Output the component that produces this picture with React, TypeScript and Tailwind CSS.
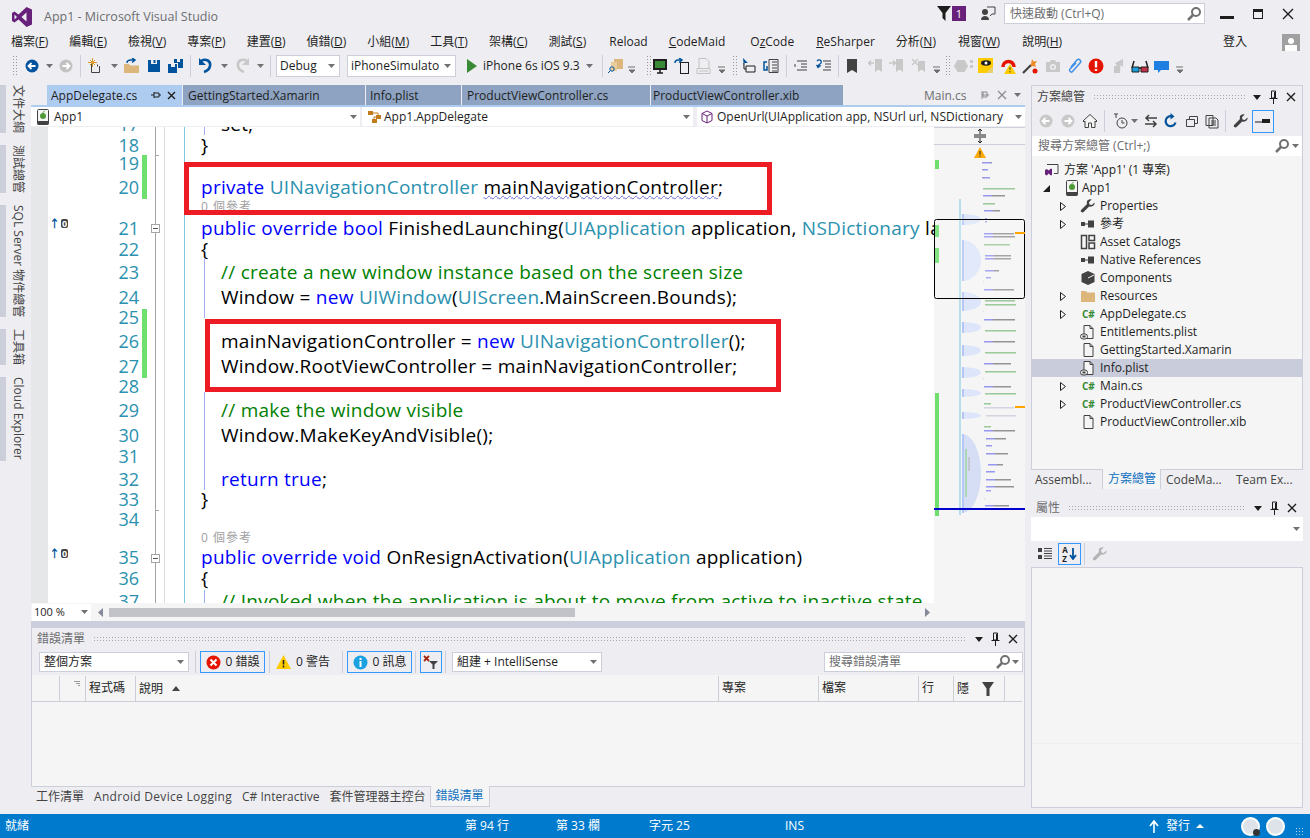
import React from 'react';

// small triangle used by every dropdown
const Caret = ({ className = '' }: { className?: string }) => (
  <svg width="7" height="4" viewBox="0 0 7 4" className={`shrink-0 ${className}`}><path d="M0 0h7L3.5 4z" fill="#717171" /></svg>
);

const Overflow = ({ className = '' }: { className?: string }) => (
  <svg width="8" height="16" viewBox="0 0 8 16" className={`shrink-0 ${className}`}><path d="M0 9h7M1 12h6L4 15z" stroke="#717171" fill="#717171" /></svg>
);

const Gripper = ({ className = '' }: { className?: string }) => (
  <div className={`w-[5px] h-[22px] shrink-0 bg-[radial-gradient(#9a9a9a_0.7px,transparent_0.8px)] bg-[length:3px_3px] ${className}`} />
);

const Sep = ({ className = '' }: { className?: string }) => <div className={`w-px h-[22px] shrink-0 bg-[#ccced9] ${className}`} />;

const Ic = ({ children, className = '', w = 16 }: { children: React.ReactNode; className?: string; w?: number }) => (
  <svg width={w} height="16" viewBox={`0 0 ${w} 16`} className={`shrink-0 ${className}`} fill="none">{children}</svg>
);

const NavCircle = ({ color, dir, className }: { color: string; dir: 'l' | 'r'; className?: string }) => (
  <Ic className={className}>
    <circle cx="8" cy="8" r="6.5" fill={color} />
    <path d={dir === 'l' ? 'M11.5 8H5M7.5 5 4.5 8l3 3' : 'M4.5 8H11M8.5 5l3 3-3 3'} stroke="#fff" strokeWidth="1.8" />
  </Ic>
);

const Floppy = ({ className }: { className?: string }) => (
  <Ic className={className}><path d="M2 2h3v4h6V2h3v12H2z" fill="#00539c" /><rect x="7.5" y="2" width="2" height="3" fill="#00539c" /></Ic>
);

const Wrench = ({ color = '#424242', className }: { color?: string; className?: string }) => (
  <Ic className={className}><path d="M14.5 4.5 11.8 7 9.5 6.5 9 4.2l2.6-2.7C9.5.8 7.2 1.8 6.8 4c-.1.8 0 1.5.2 2L1.3 11.7c-.7.8-.7 1.7 0 2.4.7.7 1.6.6 2.3 0L9.2 8.4c2.6.9 5.9-1 5.3-3.9z" fill={color} /></Ic>
);

const Doc = ({ lock = false }: { lock?: boolean }) => (
  <Ic>
    <path d="M4 1.5h6l3 3v10H4z" fill="#f5f5f5" stroke="#424242" />
    <path d="M10 1.5v3h3" stroke="#424242" />
    {lock && <><rect x="0.5" y="10" width="7" height="5" rx="2.5" fill="#f5f5f5" stroke="#424242" /><rect x="2.5" y="11.5" width="3" height="2" fill="#424242" /></>}
  </Ic>
);

const Refs = () => <Ic><rect x="1" y="6" width="4" height="4" fill="#424242" /><path d="M5 8h3" stroke="#424242" /><rect x="8" y="4.5" width="6" height="7" fill="#424242" /></Ic>;

const Folder = () => <Ic><path d="M1 3h5l1 1.5h8V14H1z" fill="#dcb67a" /></Ic>;

const CSharp = () => <span className="w-[16px] pl-[2px] text-[10px] font-bold leading-none text-[#388a34]">C#</span>;

const PhoneApp = () => (
  <Ic>
    <rect x="2.5" y="0.5" width="11" height="15" rx="1" fill="#f5f5f5" stroke="#424242" />
    <rect x="2.5" y="12" width="11" height="3.5" fill="#424242" />
    <circle cx="8" cy="7" r="3" fill="#4f9a36" />
    <path d="M8 4c0-1 .8-1.8 1.6-1.8" stroke="#4f9a36" />
  </Ic>
);

const Magnifier = ({ className = '' }: { className?: string }) => (
  <Ic className={className}><circle cx="10" cy="6" r="4" stroke="#717171" strokeWidth="2" /><path d="M7 9l-5 5" stroke="#717171" strokeWidth="2.5" /></Ic>
);

const Expander = ({ open = false }: { open?: boolean }) =>
  open ? (
    <svg width="7" height="7" viewBox="0 0 7 7"><path d="M7 0v7H0z" fill="#1e1e1e" /></svg>
  ) : (
    <svg width="6" height="9" viewBox="0 0 6 9"><path d="M.5.5l5 4-5 4z" fill="#f5f5f5" stroke="#1e1e1e" /></svg>
  );

// title buttons of a tool window: dropdown, pin, close
const PaneButtons = () => (
  <div className="flex items-center gap-[8px] shrink-0">
    <svg width="8" height="5" viewBox="0 0 8 5"><path d="M0 0h8L4 5z" fill="#1e1e1e" /></svg>
    <svg width="9" height="14" viewBox="0 0 9 14"><path d="M2.5 1h4v7h-4zM0.5 8.5h8M4.5 9v5M5.5 2v6" stroke="#1e1e1e" fill="none" /></svg>
    <svg width="10" height="10" viewBox="0 0 10 10"><path d="M1 1l8 8M9 1l-8 8" stroke="#1e1e1e" strokeWidth="1.4" /></svg>
  </div>
);

const PaneTitle = ({ title, dim = false }: { title: string; dim?: boolean }) => (
  <div className="h-[20px] shrink-0 flex items-center pl-[5px] pr-[6px] pt-[2px]">
    <span className={`text-[12px] ${dim ? 'text-[#6d6d70]' : 'text-[#444444]'}`}>{title}</span>
    <div className="flex-1 h-[6px] mx-[8px] bg-[radial-gradient(#a8a8a8_0.6px,transparent_0.7px)] bg-[length:3px_3px]" />
    <PaneButtons />
  </div>
);

const Menu = ({ label, u, after = '', className = '' }: { label: string; u: string; after?: string; className?: string }) => (
  <span className={className}>{label}<span className="underline">{u}</span>{after}</span>
);

type Tok = { t: string; c?: 'k' | 'y' | 'g' | 'w' };

const tone = { k: 'text-[#0000ff]', y: 'text-[#2b91af]', g: 'text-[#008000]', w: 'underline decoration-wavy decoration-[#6a6ad8] decoration-1' };

const lines: { n?: number; h: string; lens?: boolean; deep?: boolean; code?: Tok[] }[] = [
  { n: 17, h: 'h-[21px]', deep: true, code: [{ t: 'set;' }] },
  { n: 18, h: 'h-[18px]', code: [{ t: '}' }] },
  { n: 19, h: 'h-[24px]' },
  { n: 20, h: 'h-[19px]', code: [{ t: 'private ', c: 'k' }, { t: 'UINavigationController ', c: 'y' }, { t: 'mainNavigationController', c: 'w' }, { t: ';' }] },
  { h: 'h-[22px]', lens: true },
  { n: 21, h: 'h-[21px]', code: [{ t: 'public override bool ', c: 'k' }, { t: 'FinishedLaunching(' }, { t: 'UIApplication ', c: 'y' }, { t: 'application, ' }, { t: 'NSDictionary ', c: 'y' }, { t: 'launchOptions)' }] },
  { n: 22, h: 'h-[23px]', code: [{ t: '{' }] },
  { n: 23, h: 'h-[25px]', deep: true, code: [{ t: '// create a new window instance based on the screen size', c: 'g' }] },
  { n: 24, h: 'h-[20px]', deep: true, code: [{ t: 'Window = ' }, { t: 'new ', c: 'k' }, { t: 'UIWindow', c: 'y' }, { t: '(' }, { t: 'UIScreen', c: 'y' }, { t: '.MainScreen.Bounds);' }] },
  { n: 25, h: 'h-[24px]' },
  { n: 26, h: 'h-[25px]', deep: true, code: [{ t: 'mainNavigationController = ' }, { t: 'new ', c: 'k' }, { t: 'UINavigationController', c: 'y' }, { t: '();' }] },
  { n: 27, h: 'h-[20px]', deep: true, code: [{ t: 'Window.RootViewController = mainNavigationController;' }] },
  { n: 28, h: 'h-[24px]' },
  { n: 29, h: 'h-[25px]', deep: true, code: [{ t: '// make the window visible', c: 'g' }] },
  { n: 30, h: 'h-[21px]', deep: true, code: [{ t: 'Window.MakeKeyAndVisible();' }] },
  { n: 31, h: 'h-[23px]' },
  { n: 32, h: 'h-[20px]', deep: true, code: [{ t: 'return true', c: 'k' }, { t: ';' }] },
  { n: 33, h: 'h-[20px]', code: [{ t: '}' }] },
  { n: 34, h: 'h-[18px]' },
  { h: 'h-[20px]', lens: true },
  { n: 35, h: 'h-[21px]', code: [{ t: 'public override void ', c: 'k' }, { t: 'OnResignActivation(' }, { t: 'UIApplication ', c: 'y' }, { t: 'application)' }] },
  { n: 36, h: 'h-[23px]', code: [{ t: '{' }] },
  { n: 37, h: 'h-[24px]', deep: true, code: [{ t: '// Invoked when the application is about to move from active to inactive state', c: 'g' }] },
];

// minimap rows: y, x, width, kind (c code with blue start, g comment, d dim, b blue, t thin)
const mini: [number, number, number, string][] = [
  [162, 981, 10, 'c'], [169, 981, 6, 'c'], [177, 981, 8, 'c'], [188, 982, 32, 'g'], [195, 982, 22, 'c'], [203, 982, 12, 'g'], [210, 983, 16, 'c'],
  [218, 984, 2, 'b'], [221, 984, 2, 'b'], [233, 983, 30, 'c'], [236, 983, 31, 'c'], [244, 983, 26, 'g'], [255, 984, 26, 'c'], [258, 984, 26, 'c'],
  [270, 984, 14, 'c'], [277, 985, 5, 'b'], [281, 982, 1, 't'], [289, 983, 30, 'c'], [300, 984, 30, 'g'], [304, 984, 31, 'g'], [311, 982, 1, 't'],
  [319, 983, 31, 'c'], [330, 984, 31, 'g'], [341, 983, 31, 'c'], [352, 984, 31, 'g'], [363, 983, 27, 'c'], [371, 984, 31, 'g'], [378, 982, 1, 't'],
  [386, 983, 27, 'c'], [393, 984, 31, 'g'], [403, 983, 7, 'g'], [407, 983, 30, 'd'], [415, 985, 30, 'd'], [426, 983, 7, 'g'], [430, 983, 31, 'c'],
  [438, 985, 20, 'c'], [445, 985, 6, 'c'], [453, 985, 22, 'c'], [464, 987, 15, 'c'], [471, 985, 9, 'c'], [479, 985, 25, 'c'], [486, 985, 28, 'c'],
  [490, 985, 5, 'b'], [498, 983, 1, 't'], [505, 984, 24, 'c'],
];

const folds: [number, number][] = [[214, 225], [240, 281], [292, 311], [322, 333], [345, 356], [367, 378], [389, 397], [412, 419], [434, 513]];

const Minimap = () => (
  <div className="w-[91px] shrink-0 h-full flex flex-col bg-[#f5f5f5]">
    <div className="h-[18px] shrink-0 flex items-center justify-center border-y border-[#ccced9]">
      <svg width="12" height="14" viewBox="0 0 12 14"><path d="M0 6h12M0 8h12M6 0v5M6 9v5M4 2l2-2 2 2M4 12l2 2 2-2" stroke="#1e1e1e" fill="none" /></svg>
    </div>
    <div className="h-[15px] shrink-0 flex items-center justify-center">
      <svg width="12" height="11" viewBox="0 0 12 11"><path d="M6 0l6 11H0z" fill="#f8a90c" /><path d="M6 4v3.5M6 8.5v1.2" stroke="#222" /></svg>
    </div>
    <svg viewBox="933 160 91 443" width="91" height="443" className="shrink-0">
      <rect x="934" y="160" width="4" height="9" fill="#6fe06f" />
      <rect x="934" y="225" width="4" height="12" fill="#6fe06f" />
      <rect x="934" y="248" width="4" height="15" fill="#6fe06f" />
      <rect x="934" y="393" width="4" height="123" fill="#6fe06f" />
      <rect x="958" y="199" width="2" height="316" fill="#b5deea" />
      {folds.map(([a, b]) => (
        <g key={a}>
          <path d={`M961 ${a}A19 ${(b - a) / 2} 0 0 1 961 ${b}Z`} fill={b - a > 60 ? '#d5def5' : '#dde5fb'} />
          <rect x="961" y={a} width="2" height={b - a} fill="#b6c6f5" />
        </g>
      ))}
      <rect x="964" y="449" width="2" height="48" fill="#a9d6b5" />
      <rect x="967" y="457" width="2" height="14" fill="#c4c8d2" />
      {mini.map(([y, x, w, k]) =>
        k === 'c' ? (
          <g key={y} opacity=".6">
            <rect x={x} y={y} width={Math.min(w, 9)} height="1.5" fill="#5a5af0" />
            {w > 9 && <rect x={x + 9} y={y} width={w - 9} height="1.5" fill="#555" />}
          </g>
        ) : (
          <rect key={y} x={x} y={y} width={w} height="1.5" opacity=".55" fill={k === 'g' ? '#4fa54f' : k === 'b' ? '#5a5af0' : k === 'd' ? '#b4b8d0' : '#c8c8c8'} />
        )
      )}
      <rect x="933.5" y="219.5" width="90" height="79" rx="2" fill="#ffffff" fillOpacity=".15" stroke="#000" />
      <rect x="1014" y="232" width="10" height="2" fill="#ffa500" />
      <rect x="1014" y="406" width="10" height="2" fill="#ffa500" />
      <rect x="933" y="508" width="91" height="2" fill="#0000cd" />
    </svg>
  </div>
);

const Editor = () => (
  <div className="h-[476px] shrink-0 flex overflow-hidden">
    <div className="w-[17px] shrink-0 bg-[#e6e7e8]" />
    <div className="relative flex-1 min-w-0 bg-white overflow-hidden font-['Open_Sans','Noto_Sans_CJK_TC',sans-serif]">
      <div className="-mt-[15px]">
        {lines.map((l, i) => (
          <div key={i} className={`${l.h} flex whitespace-nowrap`}>
            <div className="w-[92px] shrink-0 pt-[3px] pr-[1px] text-right text-[18px] leading-[18px] text-[#2b91af]">{l.n}</div>
            {l.lens ? (
              <div className="ml-[61px] pt-[4px] text-[12px] leading-[18px] tracking-[1px] text-[#a0a0a0]">0 個參考</div>
            ) : (
              <div className={`${l.deep ? 'ml-[81px]' : 'ml-[61px]'} pt-[3px] text-[19px] leading-[18px] tracking-[0.26px] text-black`}>
                {l.code?.map((c, j) => <span key={j} className={c.c ? tone[c.c] : ''}>{c.t}</span>)}
              </div>
            )}
          </div>
        ))}
      </div>
      {/* outlining margin, indent guides and the annotations drawn over the code */}
      <div className="absolute left-[107px] top-0 bottom-0 w-px bg-[#a5a5a5]" />
      <div className="absolute left-[116px] top-0 bottom-0 w-px bg-[#dcdcdc]" />
      <div className="absolute left-[136px] top-0 bottom-0 w-px bg-[#7fc7e0]" />
      <div className="absolute left-[156px] top-0 h-[8px] w-px bg-[#a0b0f0]" />
      <div className="absolute left-[156px] top-[131px] h-[60px] w-px bg-[#a0b0f0]" />
      <div className="absolute left-[156px] top-[265px] h-[98px] w-px bg-[#a0b0f0]" />
      <div className="absolute left-[156px] top-[463px] bottom-0 w-px bg-[#a0b0f0]" />
      <div className="absolute left-[107px] top-[28px] h-px w-[4px] bg-[#a5a5a5]" />
      <div className="absolute left-[107px] top-[383px] h-px w-[4px] bg-[#a5a5a5]" />
      <div className="absolute left-[103px] top-[97px] size-[9px] border border-[#a5a5a5] bg-white flex items-center justify-center"><div className="w-[5px] h-px bg-[#555]" /></div>
      <div className="absolute left-[103px] top-[427px] size-[9px] border border-[#a5a5a5] bg-white flex items-center justify-center"><div className="w-[5px] h-px bg-[#555]" /></div>
      <div className="absolute left-px top-[91px] flex items-center gap-px text-[9px] font-bold leading-none"><span className="text-[11px] text-[#00539c]">↑</span><span className="bg-[#444] text-white rounded-[2px] px-[1px]">0</span></div>
      <div className="absolute left-px top-[421px] flex items-center gap-px text-[9px] font-bold leading-none"><span className="text-[11px] text-[#00539c]">↑</span><span className="bg-[#444] text-white rounded-[2px] px-[1px]">0</span></div>
      <div className="absolute left-[94px] top-[28px] w-[5px] h-[44px] bg-[#6fe06f]" />
      <div className="absolute left-[94px] top-[182px] w-[5px] h-[69px] bg-[#6fe06f]" />
      <div className="absolute left-[136px] top-[35px] w-[588px] h-[53px] border-[5px] border-[#ed1c24]" />
      <div className="absolute left-[157px] top-[192px] w-[576px] h-[73px] border-[5px] border-[#ed1c24]" />
    </div>
    <Minimap />
  </div>
);

const tree: { label: string; icon: React.ReactNode; exp?: boolean; sel?: boolean }[] = [
  { label: 'Properties', exp: true, icon: <Wrench /> },
  { label: '參考', exp: true, icon: <Refs /> },
  { label: 'Asset Catalogs', icon: <Ic><path d="M1.5 1.5h5v13h-5zM9 1.5h5.5v5H9zM9 9h5.5v5.5H9z" stroke="#424242" strokeWidth="1.5" /></Ic> },
  { label: 'Native References', icon: <Refs /> },
  { label: 'Components', icon: <Ic><path d="M8 1l6.5 3v8L8 15l-6.500-3V4z" fill="#424242" /><path d="M8 8l6-3" stroke="#f5f5f5" /></Ic> },
  { label: 'Resources', exp: true, icon: <Folder /> },
  { label: 'AppDelegate.cs', exp: true, icon: <CSharp /> },
  { label: 'Entitlements.plist', icon: <Doc lock /> },
  { label: 'GettingStarted.Xamarin', icon: <Doc /> },
  { label: 'Info.plist', sel: true, icon: <Doc lock /> },
  { label: 'Main.cs', exp: true, icon: <CSharp /> },
  { label: 'ProductViewController.cs', exp: true, icon: <CSharp /> },
  { label: 'ProductViewController.xib', icon: <Doc /> },
];

const SolutionExplorer = () => (
  <div className="h-[384px] shrink-0 flex flex-col border border-[#ccced9] border-b-0 bg-[#f5f5f5]">
    <div className="bg-[#eeeef2]"><PaneTitle title="方案總管" /></div>
    <div className="h-[30px] shrink-0 flex items-center bg-[#eeeef2]">
      <NavCircle color="#c8c8c8" dir="l" className="ml-[6px]" />
      <NavCircle color="#c8c8c8" dir="r" className="ml-[6px]" />
      <Ic className="ml-[6px]"><path d="M8 1.500 1 8l1 1 1-1v6.500h3.500V10h3v4.500H13V8l1 1 1-1z" fill="#f5f5f5" stroke="#424242" /></Ic>
      <Sep className="ml-[6px]" />
      <Ic className="ml-[8px]"><circle cx="9" cy="10" r="5" stroke="#424242" /><path d="M9 7v3h2.500M1 1h4M3 1v4" stroke="#424242" /></Ic>
      <Caret className="ml-[2px]" />
      <Ic className="ml-[5px]"><path d="M14 5H3M6 2 3 5l3 3M2 11h11M10 8l3 3-3 3" stroke="#424242" strokeWidth="1.500" /></Ic>
      <Ic className="ml-[4px]"><path d="M12.500 9.500a5 5 0 1 1-3-6" stroke="#00539c" strokeWidth="2.200" /><path d="M7.500 0l4 3.500-4 3z" fill="#00539c" /></Ic>
      <Ic className="ml-[5px]"><path d="M2.500 6.500h8v7h-8zM5.500 6V3.500h8v7H11" stroke="#424242" /></Ic>
      <Ic className="ml-[4px]"><path d="M2 2.500h7v10H2zM5 5h7l2 2v8H5z" stroke="#424242" fill="#eeeef2" /><path d="M7 8h5M7 10h5M7 12h5" stroke="#424242" /></Ic>
      <Sep className="ml-[5px]" />
      <Wrench className="ml-[7px]" />
      <div className="ml-[3px] w-[22px] h-[23px] border border-[#3399ff] flex items-center justify-center">
        <svg width="16" height="6" viewBox="0 0 16 6"><path d="M0 4h7" stroke="#1e1e1e" /><rect x="7" y="1" width="8" height="4" fill="#1e1e1e" /></svg>
      </div>
    </div>
    <div className="h-[20px] shrink-0 bg-white flex items-center pl-[6px] pr-[3px] text-[12px] text-[#6d6d70]">
      <span className="flex-1">搜尋方案總管 (Ctrl+;)</span>
      <Magnifier />
      <Caret className="ml-[2px]" />
    </div>
    <div className="flex-1 pt-[5px] text-[12px] text-[#1e1e1e]">
      <div className="h-[18px] flex items-center pl-[12px]">
        <Ic className="mr-[4px]"><path d="M3 2.500h11v9H10" stroke="#424242" /><path d="M1 8l2-1 1.500 1.500L7 6.500l1 .5v6l-1 .5-2.500-2L3 13.500 1 12.500z" fill="#68217a" /></Ic>
        方案 'App1' (1 專案)
      </div>
      <div className="h-[18px] flex items-center pl-[11px]">
        <div className="w-[21px]"><Expander open /></div>
        <div className="w-[18px]"><PhoneApp /></div>
        App1
      </div>
      {tree.map(r => (
        <div key={r.label} className={`h-[18px] flex items-center pl-[28px] ${r.sel ? 'bg-[#c9ccda]' : ''}`}>
          <div className="w-[20px]">{r.exp && <Expander />}</div>
          <div className="w-[20px] flex">{r.icon}</div>
          {r.label}
        </div>
      ))}
    </div>
  </div>
);

const Properties = () => (
  <div className="h-[311px] shrink-0 flex flex-col">
    <PaneTitle title="屬性" dim />
    <div className="h-[24px] shrink-0 bg-white flex items-center justify-end pr-[3px]"><Caret /></div>
    <div className="h-[26px] shrink-0 flex items-center">
      <Ic className="ml-[6px]"><path d="M1 2h4v4H1zM1 9h4v4H1z" fill="#424242" /><path d="M7 2.500h8M7 5h8M7 7.500h8M7 10h8M7 12.500h8" stroke="#424242" /></Ic>
      <div className="ml-[5px] w-[23px] h-[22px] border border-[#3399ff] flex items-center justify-center gap-px">
        <span className="flex flex-col text-[8px] font-bold leading-[9px] text-[#1e1e1e]"><span>A</span><span>Z</span></span>
        <svg width="8" height="12" viewBox="0 0 8 12"><path d="M4 0v10M1 7l3 4 3-4" stroke="#00539c" strokeWidth="1.800" fill="none" /></svg>
      </div>
      <Sep className="ml-[3px]" />
      <Wrench color="#b4b4b4" className="ml-[7px]" />
    </div>
    <div className="flex-1 bg-[#f5f5f5] border border-[#ccced9] flex flex-col">
      <div className="h-[176px] border-b border-[#eeeef2]" />
    </div>
  </div>
);

const ErrorList = () => (
  <div className="h-[159px] shrink-0 flex flex-col border border-t-0 border-[#ccced9] bg-[#f5f5f5]">
    <div className="bg-[#eeeef2]"><PaneTitle title="錯誤清單" dim /></div>
    <div className="h-[27px] shrink-0 bg-[#eeeef2] pt-px flex items-center text-[12px] text-[#1e1e1e]">
      <div className="ml-[7px] w-[150px] h-[20px] bg-white border border-[#ccced9] flex items-center pl-[4px] pr-[4px]">
        <span className="flex-1">整個方案</span><Caret />
      </div>
      <Sep className="ml-[6px]" />
      <div className="ml-[4px] w-[65px] h-[22px] border border-[#3399ff] flex items-center justify-center gap-[5px]">
        <svg width="15" height="15" viewBox="0 0 15 15"><circle cx="7.500" cy="7.500" r="7" fill="#e51400" /><path d="M4.500 4.500l6 6M10.500 4.500l-6 6" stroke="#fff" strokeWidth="2" /></svg>
        <span>0 錯誤</span>
      </div>
      <Sep className="ml-[4px]" />
      <div className="ml-[6px] w-[58px] h-[22px] flex items-center gap-[5px]">
        <svg width="15" height="14" viewBox="0 0 15 14"><path d="M7.500 0l7.500 14H0z" fill="#ffcc00" /><path d="M7.500 5v4.500M7.500 10.500v2" stroke="#1e1e1e" strokeWidth="1.500" /></svg>
        <span>0 警告</span>
      </div>
      <Sep className="ml-[8px]" />
      <div className="ml-[4px] w-[65px] h-[22px] border border-[#3399ff] flex items-center justify-center gap-[5px]">
        <svg width="15" height="15" viewBox="0 0 15 15"><circle cx="7.500" cy="7.500" r="7" fill="#1ba1e2" /><path d="M7.500 6v6M7.500 3v2" stroke="#fff" strokeWidth="2" /></svg>
        <span>0 訊息</span>
      </div>
      <Sep className="ml-[3px]" />
      <div className="ml-[4px] w-[22px] h-[22px] border border-[#3399ff] flex items-center justify-center">
        <svg width="16" height="14" viewBox="0 0 16 14"><path d="M1 1l5 5M6 1L1 6" stroke="#a1260d" strokeWidth="1.800" /><path d="M6 6h9l-3.500 3.500V14H9.500V9.500z" fill="#424242" /></svg>
      </div>
      <Sep className="ml-[3px]" />
      <div className="ml-[6px] w-[150px] h-[20px] bg-white border border-[#ccced9] flex items-center pl-[4px] pr-[4px]">
        <span className="flex-1">組建 + IntelliSense</span><Caret />
      </div>
      <div className="ml-[222px] w-[199px] h-[20px] bg-white border border-[#ccced9] flex items-center pl-[4px] pr-[3px] text-[#6d6d70]">
        <span className="flex-1">搜尋錯誤清單</span>
        <Magnifier />
        <Caret className="ml-[1px]" />
      </div>
    </div>
    <div className="h-[26px] shrink-0 mt-[1px] flex items-stretch border-b border-[#ccced9] text-[12px] text-[#1e1e1e] leading-[24px] mr-[2px]">
      <div className="w-[28px] border-r border-[#ccced9]" />
      <div className="w-[26px] border-r border-[#ccced9] flex justify-end pr-[5px] pt-[5px]">
        <svg width="6" height="5" viewBox="0 0 6 5"><path d="M0 .5h6M2 2.500h4M4 4.500h2" stroke="#9a9a9a" /></svg>
      </div>
      <div className="w-[50px] border-r border-[#ccced9] pl-[3px]">程式碼</div>
      <div className="w-[583px] border-r border-[#ccced9] pl-[3px] flex items-center">
        說明
        <svg width="8" height="5" viewBox="0 0 8 5" className="ml-[9px]"><path d="M4 0l4 5H0z" fill="#424242" /></svg>
      </div>
      <div className="w-[100px] border-r border-[#ccced9] pl-[3px]">專案</div>
      <div className="w-[100px] border-r border-[#ccced9] pl-[3px]">檔案</div>
      <div className="w-[35px] border-r border-[#ccced9] pl-[3px]">行</div>
      <div className="w-[51px] border-r border-[#ccced9] pl-[3px] flex items-center justify-between pr-[10px]">
        隱
        <svg width="12" height="14" viewBox="0 0 12 14"><path d="M0 0h12L7.500 6.500V14h-3V6.500z" fill="#424242" /></svg>
      </div>
    </div>
  </div>
);

export default function App() {
  return (
    <div className="w-[1310px] h-[838px] flex flex-col overflow-hidden bg-[#eeeef2] font-['Open_Sans','Noto_Sans_CJK_TC',sans-serif] text-[#1e1e1e]">
      {/* Title bar */}
      <div className="h-[32px] shrink-0 flex items-start relative">
        <svg width="20" height="20" viewBox="0 0 20 20" className="ml-[12px] mt-[7px]">
          <path fillRule="evenodd" d="M14.500 0 20 2.500v15L14.500 20 6.500 12.500 2.500 15.500 0 14V6l2.500-1.500 4 3zM14.500 5.500 9.500 10l5 4.500zM2.500 7.500v5L5 10z" fill="#68217a" />
        </svg>
        <span className="ml-[12px] mt-[8px] text-[12.500px] text-[#6d6d70]">App1 - Microsoft Visual Studio</span>
        <div className="ml-auto mt-[3px] flex items-center">
          <svg width="14" height="15" viewBox="0 0 14 15"><path d="M0 0h14L8.500 7v8L5.500 12V7z" fill="#1e1e1e" /></svg>
          <span className="ml-px w-[14px] h-[15px] bg-[#68217a] text-white text-[11px] leading-[15px] text-center">1</span>
          <svg width="15" height="15" viewBox="0 0 15 15" className="ml-[15px]"><circle cx="4" cy="6" r="3" fill="#424242" /><path d="M0 14c0-3 2-4 4-4s4 1 4 4z" fill="#424242" /><path d="M6 1h8v7h-3l-2 2" stroke="#424242" fill="none" /></svg>
          <div className="ml-[8px] w-[201px] h-[21px] bg-white border border-[#ccced9] flex items-center pl-[5px] pr-[2px] text-[12px] text-[#6d6d70]">
            <span className="flex-1">快速啟動 (Ctrl+Q)</span>
            <Magnifier />
          </div>
          <div className="ml-[15px] w-[14px] h-[3px] mt-[8px] bg-[#1e1e1e]" />
          <div className="ml-[19px] w-[10px] h-[10px] border border-[#1e1e1e] border-t-[3px]" />
          <svg width="12" height="12" viewBox="0 0 12 12" className="ml-[19px] mr-[16px]"><path d="M1 1l10 10M11 1 1 11" stroke="#1e1e1e" strokeWidth="1.400" /></svg>
        </div>
      </div>
      {/* Menu bar */}
      <div className="h-[18px] shrink-0 flex items-center gap-[21px] pl-[11px] pr-[10px] pt-[2px] text-[12px] text-[#1e1e1e] whitespace-nowrap">
        <span>檔案(<span className="underline">F</span>)</span>
        <span>編輯(<span className="underline">E</span>)</span>
        <span>檢視(<span className="underline">V</span>)</span>
        <span>專案(<span className="underline">P</span>)</span>
        <span>建置(<span className="underline">B</span>)</span>
        <span>偵錯(<span className="underline">D</span>)</span>
        <span>小組(<span className="underline">M</span>)</span>
        <span>工具(<span className="underline">T</span>)</span>
        <span>架構(<span className="underline">C</span>)</span>
        <span>測試(<span className="underline">S</span>)</span>
        <span className="ml-[2px]">Reload</span>
        <Menu label="" u="C" after="odeMaid" />
        <span className="ml-[4px]">O<span className="underline">z</span>Code</span>
        <Menu label="" u="R" after="eSharper" className="ml-px" />
        <span>分析(<span className="underline">N</span>)</span>
        <span className="ml-px">視窗(<span className="underline">W</span>)</span>
        <span className="ml-px">說明(<span className="underline">H</span>)</span>
        <span className="ml-auto">登入</span>
        <div className="w-[18px] h-[17px] ml-[14px] bg-[#a0a0a0] flex flex-col items-center justify-end">
          <div className="size-[6px] rounded-full bg-white" />
          <div className="w-[12px] h-[6px] mt-px bg-white" />
        </div>
      </div>
      {/* Toolbar */}
      <div className="h-[32px] shrink-0 flex items-center text-[12px]">
        <Gripper className="ml-[12px]" />
        <NavCircle color="#00539c" dir="l" className="ml-[7px]" />
        <Caret className="ml-[6px]" />
        <NavCircle color="#c2c2c2" dir="r" className="ml-[5px]" />
        <Sep className="ml-[6px]" />
        <Ic className="ml-[7px]"><path d="M6 5H3.500v9.500h8V8M9.500 8.500v-2" stroke="#424242" /><path d="M2 2l5 5M7 2 2 7M4.500 0v9M0 4.500h9" stroke="#d89a2b" /></Ic>
        <Caret className="ml-[7px]" />
        <Ic className="ml-[6px]"><path d="M0 6h5l1 1.500h9V15H0z" fill="#dcb67a" /><path d="M3 5c0-2 2-3 4-3h3M8 0l3 2-3 2.500" stroke="#00539c" strokeWidth="1.500" /></Ic>
        <Floppy className="ml-[6px]" />
        <Ic className="ml-[6px]"><path d="M0 6h3v3h4V6h2v9H0z" fill="#00539c" /><path d="M6 1h3v3h3V1h3v9h-5V5H6z" fill="#00539c" /></Ic>
        <Sep className="ml-[6px]" />
        <Ic className="ml-[7px]"><path d="M3 3c5-3 10 0 9 5-.5 3-3 5-6 6" stroke="#00539c" strokeWidth="2.600" /><path d="M1 0v7h7z" fill="#00539c" /></Ic>
        <Caret className="ml-[7px]" />
        <Ic className="ml-[6px]"><path d="M13 3C8 0 3 3 4 8c.5 3 3 5 6 6" stroke="#c8c8c8" strokeWidth="2.600" /><path d="M15 0v7H8z" fill="#c8c8c8" /></Ic>
        <Caret className="ml-[7px]" />
        <Sep className="ml-[6px]" />
        <div className="ml-[5px] w-[64px] h-[22px] bg-white border border-[#ccced9] flex items-center pl-[3px] pr-[4px]"><span className="flex-1">Debug</span><Caret /></div>
        <div className="ml-[7px] w-[109px] h-[22px] bg-white border border-[#ccced9] flex items-center pl-[3px] pr-[4px] overflow-hidden"><span className="flex-1 overflow-hidden whitespace-nowrap">iPhoneSimulato</span><Caret /></div>
        <svg width="10" height="14" viewBox="0 0 10 14" className="ml-[11px] shrink-0"><path d="M0 0l10 7-10 7z" fill="#388a34" /></svg>
        <span className="ml-[6px] w-[95px] shrink-0 whitespace-nowrap">iPhone 6s iOS 9.3</span>
        <Caret className="ml-[8px]" />
        <Sep className="ml-[9px]" />
        <Ic className="ml-[5px]"><path d="M6 1h9v10H6z" fill="#dcb67a" /><path d="M3 4h6v9H3z" fill="#e8cc9a" /><circle cx="4" cy="11" r="2.200" stroke="#00539c" /><path d="M2.500 12.500 0 15" stroke="#00539c" /></Ic>
        <Overflow className="ml-[4px]" />
        <Gripper className="ml-[10px]" />
        <Ic className="ml-px"><rect x="1" y="1" width="14" height="11" fill="#1e1e1e" /><rect x="3" y="3" width="10" height="7" fill="#388a34" /><path d="M5 15h6M8 12v3" stroke="#1e1e1e" strokeWidth="1.500" /></Ic>
        <Ic className="ml-[6px]"><rect x="6.500" y="4.500" width="8" height="11" stroke="#1e1e1e" /><path d="M1 5c0-2 1.500-3 3-3h3M5 0l3 2-3 2.500" stroke="#00539c" strokeWidth="1.500" /></Ic>
        <Ic className="ml-[6px]"><path d="M3 .5h7l3 3v7H3zM1 10.500h13v5H1z" stroke="#c2c2c2" /><path d="M3 13h9" stroke="#c2c2c2" /></Ic>
        <Overflow className="ml-[6px]" />
        <Gripper className="ml-[6px]" />
        <Ic className="ml-[4px]"><path d="M2 0l5 5H3v5" fill="#00539c" /><path d="M5 8h9v6H5zM3 5v6h2" stroke="#1e1e1e" /></Ic>
        <Ic className="ml-[6px]"><path d="M6 1.500h9v13H6zM9 4h5M9 7h5M9 10h5M9 13h5" stroke="#424242" /><path d="M4 4H1v8h3V8" stroke="#00539c" strokeWidth="1.500" /></Ic>
        <Sep className="ml-[7px]" />
        <Ic className="ml-[6px]"><path d="M4 3h10M8 6h6M8 9h6M4 12h10" stroke="#424242" /><path d="M2 6v3" stroke="#424242" /></Ic>
        <Ic className="ml-[7px]"><path d="M7 3h8M9 6h6M9 9h6M7 12h8" stroke="#424242" /><path d="M1 3c2-2 5-1 4 2-.5 1-2 1-3 3M2 9.500l-1-2 3 .5z" stroke="#00539c" strokeWidth="1.300" /></Ic>
        <Sep className="ml-[6px]" />
        <Ic className="ml-[5px]"><path d="M3 1h10v14l-5-3-5 3z" fill="#424242" /></Ic>
        <Ic className="ml-[8px]"><path d="M7 1h7v13l-3.500-2.500L7 14z" fill="#c8c8c8" /><path d="M6 5H1M3 2.500 .5 5 3 7.500" stroke="#c8c8c8" strokeWidth="1.500" /></Ic>
        <Ic className="ml-[5px]"><path d="M7 1h7v13l-3.500-2.500L7 14z" fill="#c8c8c8" /><path d="M0 5h6M4 2.500 6.500 5 4 7.500" stroke="#c8c8c8" strokeWidth="1.500" /></Ic>
        <Ic className="ml-[6px]"><path d="M7 3h7v11l-3.500-2.500L7 14z" fill="#c8c8c8" /><path d="M1 1l6 6M7 1 1 7" stroke="#c8c8c8" strokeWidth="1.500" /></Ic>
        <Overflow className="ml-[6px]" />
        <Gripper className="ml-[4px]" />
        <Ic className="ml-[3px]"><path d="M4.500 2h7l3.500 6-3.500 6h-7L1 8z" fill="#c8c8c8" /></Ic>
        <svg width="3" height="12" viewBox="0 0 3 12" className="shrink-0 ml-px"><rect width="3" height="3" fill="#c8c8c8" /><rect y="5" width="3" height="3" fill="#c8c8c8" /></svg>
        <Ic className="ml-[5px]"><rect width="15" height="15" fill="#ffcc00" /><ellipse cx="8" cy="5" rx="5" ry="2.800" fill="#1e1e1e" /><circle cx="8" cy="5" r="1.500" fill="#fff" /><path d="M15 8v7H8z" fill="#e8d070" /></Ic>
        <Ic className="ml-[7px]"><path d="M2 9a5.500 5.500 0 1 1 11 0" stroke="#e51400" strokeWidth="3.500" /><path d="M9 6l6 10H3z" fill="#ffcc00" /><path d="M9 9v3M9 13v1.500" stroke="#5a4a00" /></Ic>
        <Ic className="ml-[5px]"><path d="M1 15l8-8" stroke="#424242" strokeWidth="2.200" /><path d="M10 1l1.500 2.500L15 3l-2 3 1 3-3-1-2 1V6z" fill="#f08a24" /><circle cx="13" cy="13" r="2.500" fill="#e51400" /></Ic>
        <Ic className="ml-[7px]"><path d="M1 4h4l1-2h4l1 2h4v10H1z" fill="#c8c8c8" /><circle cx="8" cy="9" r="3" fill="#eeeef2" /><circle cx="8" cy="9" r="1.500" fill="#c8c8c8" /></Ic>
        <Ic className="ml-[6px]"><path d="M4 9l6-7c2-2 5 1 3 3l-7.500 8.500c-1.500 1.500-4 -.5-2.500-2.500L9 5" stroke="#3f8fe5" strokeWidth="1.500" /></Ic>
        <svg width="16" height="16" viewBox="0 0 16 16" className="ml-[5px] shrink-0"><circle cx="8" cy="8" r="7.500" fill="#e51400" /><path d="M8 3v6.500M8 11v2" stroke="#fff" strokeWidth="2.400" /></svg>
        <Ic className="ml-[7px]"><path d="M3 15V8h3L4 5l8-4v8l-2.500-2-.5 8z" fill="#c8c8c8" /></Ic>
        <svg width="18" height="16" viewBox="0 0 18 16" className="ml-[4px] shrink-0"><path d="M3 3 1 10M15 3l2 7M8 10h2" stroke="#1e1e1e" strokeWidth="1.500" /><path d="M1 9h7v5H1z" fill="#1ba1e2" stroke="#1e1e1e" /><path d="M10 9h7v5h-7z" fill="#c4314b" stroke="#1e1e1e" /></svg>
        <Ic className="ml-[5px]"><path d="M0 3h15v9H7l-3 3v-3H0z" fill="#1e7fe0" /></Ic>
        <Overflow className="ml-[6px]" />
      </div>
      {/* Main area */}
      <div className="h-[732px] shrink-0 flex">
        {/* Left rail with the vertical tabs */}
        <div className="w-[31px] shrink-0 pt-[3px] flex flex-col gap-[12px] text-[12px] text-[#444444]">
          {[
            { t: '文件大綱', h: 'h-[48px]' },
            { t: '測試總管', h: 'h-[48px]' },
            { t: 'SQL Server 物件總管', h: 'h-[112px]' },
            { t: '工具箱', h: 'h-[36px]' },
            { t: 'Cloud Explorer', h: 'h-[84px]' },
          ].map(v => (
            <div key={v.t} className={`${v.h} flex`}>
              <div className="w-[6px] shrink-0 bg-[#ccced9]" />
              <div className="ml-[3px] w-[18px] [writing-mode:vertical-rl] [text-orientation:sideways] whitespace-nowrap leading-[18px]">{v.t}</div>
            </div>
          ))}
        </div>
        {/* Editor column */}
        <div className="w-[994px] shrink-0 flex flex-col pt-[3px]">
          <div className="h-[20px] shrink-0 flex ml-[16px] text-[12px] leading-[21px] whitespace-nowrap">
            <div className="w-[135px] shrink-0 bg-[#aecbf0] flex items-center pl-[4px] mr-px">
              <span className="flex-1">AppDelegate.cs</span>
              <svg width="10" height="10" viewBox="0 0 10 10"><path d="M0 5h3M3 2v6M3 3h5v4H3M8 5h2" stroke="#1e1e1e" fill="none" /></svg>
              <svg width="9" height="9" viewBox="0 0 9 9" className="mx-[6px]"><path d="M1 1l7 7M8 1 1 8" stroke="#1e1e1e" strokeWidth="1.400" /></svg>
            </div>
            <div className="w-[182px] shrink-0 bg-[#8da3c1] pl-[5px] mr-px">GettingStarted.Xamarin</div>
            <div className="w-[95px] shrink-0 bg-[#8da3c1] pl-[4px] mr-px">Info.plist</div>
            <div className="w-[188px] shrink-0 bg-[#8da3c1] pl-[5px] mr-px">ProductViewController.cs</div>
            <div className="w-[192px] shrink-0 bg-[#8da3c1] pl-[2px]">ProductViewController.xib</div>
            <div className="flex-1 flex items-center text-[#6d6d70] pl-[81px]">
              Main.cs
              <svg width="10" height="10" viewBox="0 0 10 10" className="ml-[13px]"><path d="M3 1v8M3 5h7M4 2h4v5H4z" stroke="#8a8a8a" fill="none" /></svg>
              <svg width="10" height="10" viewBox="0 0 10 10" className="ml-[8px]"><path d="M1 1l8 8M9 1 1 9" stroke="#8a8a8a" strokeWidth="1.200" /></svg>
              <Caret className="ml-[7px]" />
            </div>
          </div>
          <div className="h-[22px] shrink-0 border-t-2 border-[#aecbf0] flex gap-[2px] text-[12px] whitespace-nowrap">
            <div className="w-[329px] shrink-0 h-[19px] bg-white flex items-center pl-[4px] pr-[3px]">
              <PhoneApp /><span className="flex-1 ml-[3px]">App1</span><Caret />
            </div>
            <div className="w-[331px] shrink-0 h-[19px] bg-white flex items-center pl-[5px] pr-[3px]">
              <Ic><path d="M1 2h5v4H1zM9 6h5v4H9zM5 10h5v4H5z" fill="#c27d1a" /><path d="M6 4h5v2M7 10V8h2" stroke="#c27d1a" /></Ic>
              <span className="flex-1 ml-px">App1.AppDelegate</span><Caret />
            </div>
            <div className="flex-1 h-[19px] bg-white flex items-center pl-[2px] pr-[3px] ml-[2px]">
              <Ic><path d="M8 2l5 2.500v7L8 14l-5-2.500v-7z" stroke="#68217a" /><path d="M3 4.500 8 7l5-2.500M8 7v7" stroke="#68217a" /></Ic>
              <span className="flex-1 ml-[2px] overflow-hidden">OpenUrl(UIApplication app, NSUrl url, NSDictionary</span><Caret className="ml-[6px]" />
            </div>
          </div>
          <Editor />
          {/* Horizontal scroll row */}
          <div className="h-[18px] shrink-0 flex bg-[#f5f5f5] items-center">
            <div className="w-[59px] h-[17px] bg-white flex items-center text-[11px] pl-[2px] pr-[3px] ml-px"><span className="flex-1">100 %</span><Caret /></div>
            <svg width="5" height="9" viewBox="0 0 5 9" className="ml-[7px]"><path d="M5 0v9L0 4.500z" fill="#868999" /></svg>
            <div className="ml-[6px] w-[466px] h-[9px] bg-[#c2c3c9]" />
            <svg width="5" height="9" viewBox="0 0 5 9" className="ml-[350px]"><path d="M0 0v9l5-4.500z" fill="#868999" /></svg>
          </div>
          <div className="h-[7px] shrink-0 bg-[#cccedb]" />
          <ErrorList />
          <div className="h-[20px] shrink-0 flex items-start pl-[5px] gap-[10px] text-[12px] text-[#444444] whitespace-nowrap leading-[20px]">
            <span>工作清單</span>
            <span className="tracking-[0.3px]">Android Device Logging</span>
            <span>C# Interactive</span>
            <span>套件管理器主控台</span>
            <span className="-mt-px -ml-[6px] px-[5px] bg-[#f5f5f5] border border-t-0 border-[#ccced9] text-[#0e70c0]">錯誤清單</span>
          </div>
        </div>
        {/* Right column */}
        <div className="w-[272px] shrink-0 ml-[6px] flex flex-col pt-[3px]">
          <SolutionExplorer />
          <div className="h-[20px] shrink-0 flex items-start text-[12px] text-[#444444] whitespace-nowrap leading-[20px] border-t border-[#ccced9]">
            <span className="w-[71px] pl-[4px]">Assembl...</span>
            <span className="w-[59px] -mt-px pl-[5px] bg-[#f5f5f5] border border-t-0 border-[#ccced9] text-[#0e70c0]">方案總管</span>
            <span className="w-[70px] pl-[5px]">CodeMa...</span>
            <span className="pl-[5px]">Team Ex...</span>
          </div>
          <div className="h-[8px] shrink-0 bg-[#eeeef2]" />
          <Properties />
        </div>
      </div>
      {/* Status bar */}
      <div className="flex-1 bg-[#007acc] flex items-center text-[12px] text-white whitespace-nowrap pl-[5px]">
        <span className="w-[460px] shrink-0">就緒</span>
        <span className="w-[91px] shrink-0">第 94 行</span>
        <span className="w-[93px] shrink-0">第 33 欄</span>
        <span className="w-[136px] shrink-0">字元 25</span>
        <span className="w-[364px] shrink-0">INS</span>
        <svg width="10" height="13" viewBox="0 0 10 13" className="shrink-0"><path d="M5 13V2M1 6l4-5 4 5" stroke="#fff" strokeWidth="1.600" fill="none" /></svg>
        <span className="ml-[7px]">發行</span>
        <svg width="8" height="4" viewBox="0 0 8 4" className="ml-[6px]"><path d="M4 0l4 4H0z" fill="#fff" /></svg>
        <div className="relative ml-[37px] size-[19px] rounded-full border-2 border-white bg-[#dde3e8]">
          <div className="absolute -right-[2px] -bottom-[2px] size-[7px] rounded-full bg-[#333]" />
        </div>
        <div className="ml-[6px] size-[19px] rounded-full border-2 border-white bg-[#dde3e8]" />
        <div className="ml-[10px] size-[9px] self-end mb-[2px] bg-[radial-gradient(#a8d4f0_0.6px,transparent_0.7px)] bg-[length:3px_3px]" />
      </div>
    </div>
  );
}
